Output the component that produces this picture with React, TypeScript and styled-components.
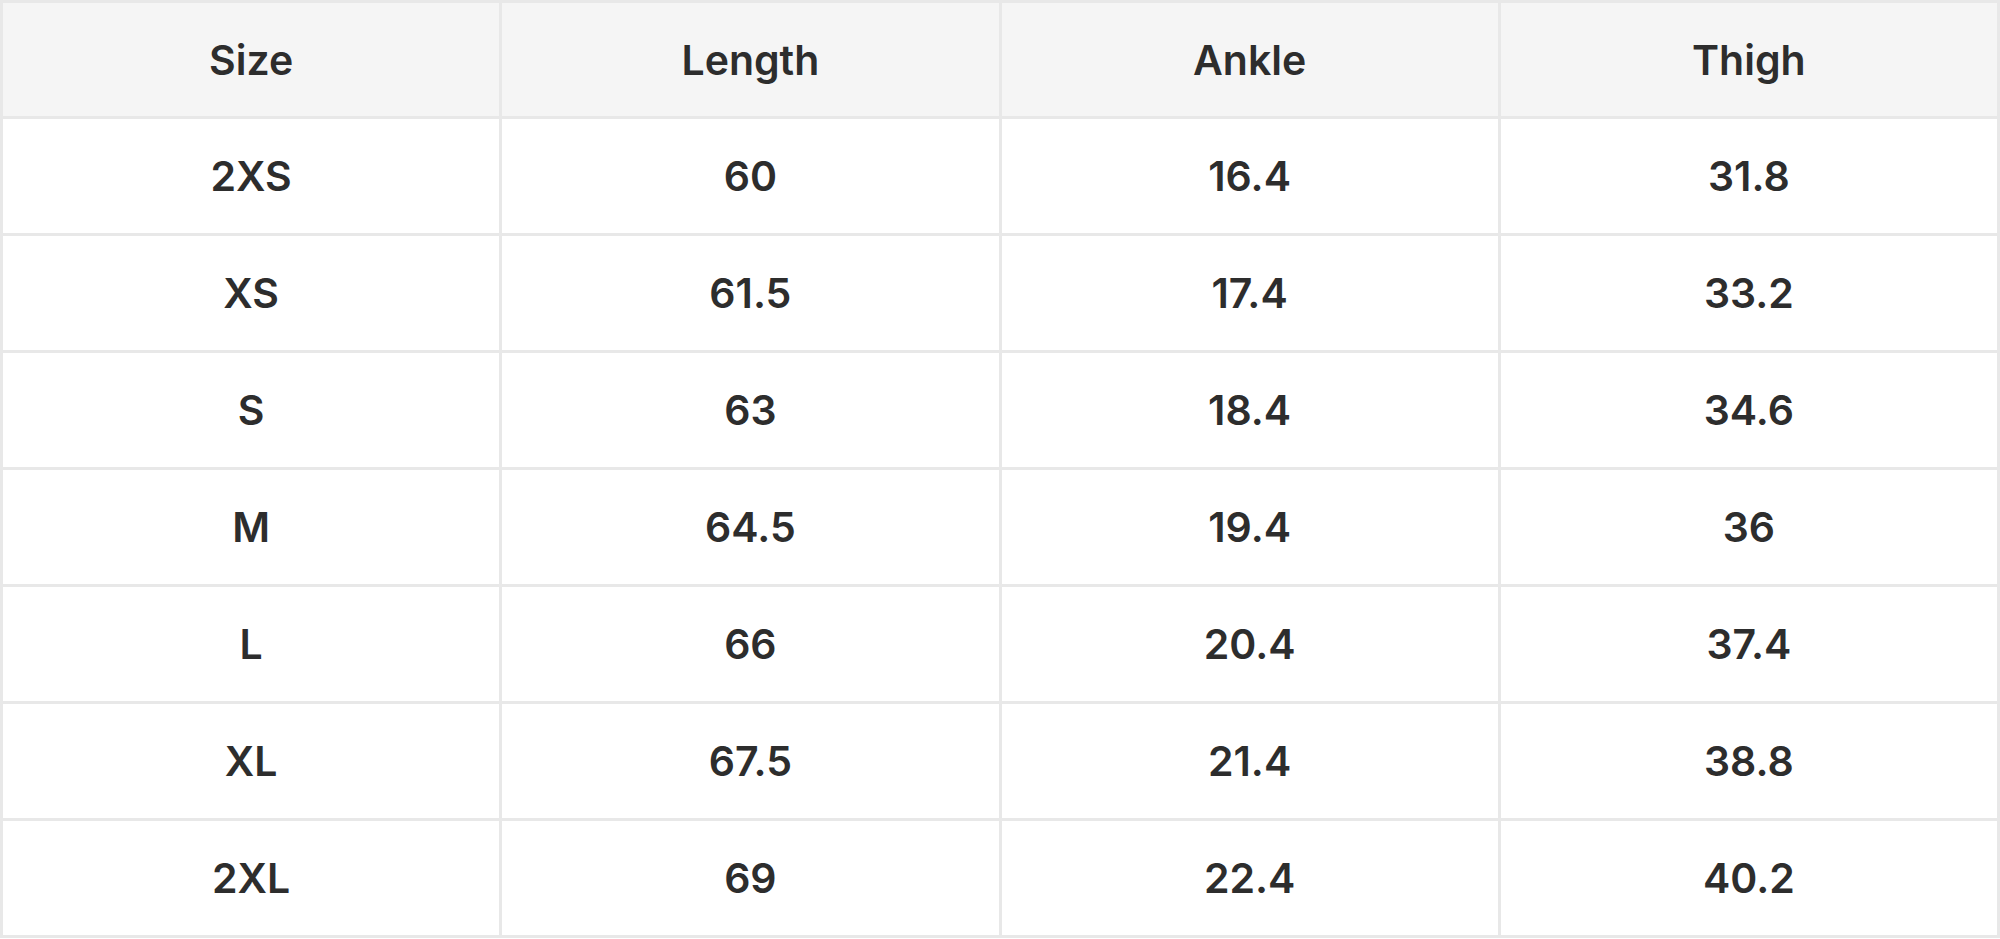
import React from 'react';
import styled, { createGlobalStyle } from 'styled-components';

const GlobalStyle = createGlobalStyle`
  html, body {
    margin: 0;
    padding: 0;
    background: #ffffff;
  }
  body {
    font-family: Inter, "Noto Sans", sans-serif;
  }
`;

const columns = ['Size', 'Length', 'Ankle', 'Thigh'];

const rows: string[][] = [
  ['2XS', '60', '16.4', '31.8'],
  ['XS', '61.5', '17.4', '33.2'],
  ['S', '63', '18.4', '34.6'],
  ['M', '64.5', '19.4', '36'],
  ['L', '66', '20.4', '37.4'],
  ['XL', '67.5', '21.4', '38.8'],
  ['2XL', '69', '22.4', '40.2'],
];

const App = () => {
  return (
    <>
      <GlobalStyle />
      <SizeTable>
        <thead>
          <tr>
            {columns.map((c) => (
              <HeadCell key={c}>{c}</HeadCell>
            ))}
          </tr>
        </thead>
        <tbody>
          {rows.map((r) => (
            <tr key={r[0]}>
              {r.map((v, i) => (
                <Cell key={i}>{v}</Cell>
              ))}
            </tr>
          ))}
        </tbody>
      </SizeTable>
    </>
  );
};

export default App;

const SizeTable = styled.table`
  width: 2000px;
  border-collapse: collapse;
  table-layout: fixed;
  border: 3px solid #e8e8e8;
`;

const HeadCell = styled.th`
  height: 113px;
  padding: 0;
  background: #f5f5f5;
  border: 3px solid #e8e8e8;
  color: #2d2d2d;
  font-size: 41px;
  font-weight: 600;
  text-align: center;
  vertical-align: middle;
`;

const Cell = styled.td`
  height: 114px;
  padding: 0;
  border: 3px solid #e8e8e8;
  color: #2d2d2d;
  font-size: 41px;
  font-weight: 600;
  text-align: center;
  vertical-align: middle;
`;
